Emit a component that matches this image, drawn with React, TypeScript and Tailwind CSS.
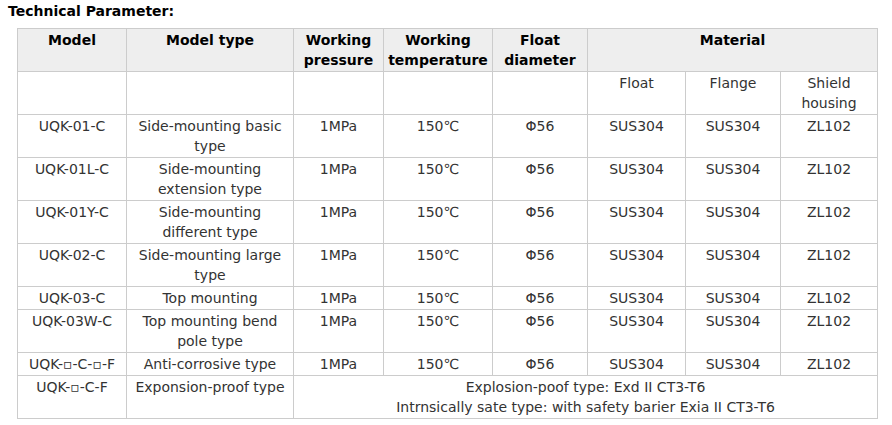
const SQ = '▫';

const rows: { model: string; type: string }[] = [
  { model: 'UQK-01-C', type: 'Side-mounting basic type' },
  { model: 'UQK-01L-C', type: 'Side-mounting extension type' },
  { model: 'UQK-01Y-C', type: 'Side-mounting different type' },
  { model: 'UQK-02-C', type: 'Side-mounting large type' },
  { model: 'UQK-03-C', type: 'Top mounting' },
  { model: 'UQK-03W-C', type: 'Top mounting bend pole type' },
  { model: `UQK-${SQ}-C-${SQ}-F`, type: 'Anti-corrosive type' },
];

const td = 'border border-[#cccccc] px-1 py-px align-top text-center';
const th = 'border border-[#cccccc] px-1 py-px align-top text-center font-bold text-black';

export default function App() {
  return (
    <div className="bg-white w-[892px] h-[425px] pl-[8px] text-[14px] leading-[20px] text-[#333333] font-['DejaVu_Sans',Verdana,sans-serif]">
      <h3 className="font-bold text-black h-[28px] pt-[1px]">Technical Parameter:</h3>
      <table className="ml-[9px] table-fixed border-collapse w-[860px]">
        <colgroup>
          <col className="w-[109px]" />
          <col className="w-[167px]" />
          <col className="w-[90px]" />
          <col className="w-[109px]" />
          <col className="w-[95px]" />
          <col className="w-[98px]" />
          <col className="w-[95px]" />
          <col className="w-[97px]" />
        </colgroup>
        <tbody>
          <tr className="bg-[#eeeeee]">
            <th className={th}>Model</th>
            <th className={th}>Model type</th>
            <th className={th}>Working pressure</th>
            <th className={th}>Working temperature</th>
            <th className={th}>Float diameter</th>
            <th className={th} colSpan={3}>Material</th>
          </tr>
          <tr>
            <td className={td}></td>
            <td className={td}></td>
            <td className={td}></td>
            <td className={td}></td>
            <td className={td}></td>
            <td className={td}>Float</td>
            <td className={td}>Flange</td>
            <td className={td}>Shield housing</td>
          </tr>
          {rows.map((r) => (
            <tr key={r.model}>
              <td className={td}>{r.model}</td>
              <td className={td}>{r.type}</td>
              <td className={td}>1MPa</td>
              <td className={td}>150℃</td>
              <td className={td}>Φ56</td>
              <td className={td}>SUS304</td>
              <td className={td}>SUS304</td>
              <td className={td}>ZL102</td>
            </tr>
          ))}
          <tr>
            <td className={td}>UQK-{SQ}-C-F</td>
            <td className={td}>Exponsion-proof type</td>
            <td className={td} colSpan={6}>
              Explosion-poof type: Exd II CT3-T6
              <br />
              Intrnsically sate type: with safety barier Exia II CT3-T6
            </td>
          </tr>
        </tbody>
      </table>
    </div>
  );
}
